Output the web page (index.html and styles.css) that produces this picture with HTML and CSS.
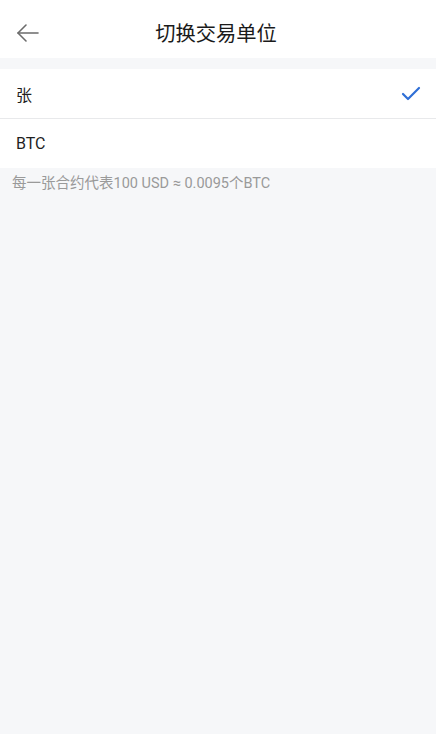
FILE: index.html
```html
<!DOCTYPE html>
<html lang="zh-CN">
<head>
    <meta charset="UTF-8">
    <meta name="viewport" content="width=device-width, initial-scale=1.0">
    <title>切换交易单位</title>
    <link rel="stylesheet" href="styles.css">
</head>
<body>
    <header class="top-bar">
        <span class="back-btn">
            <svg width="24" height="24" viewBox="0 0 24 24" fill="none" stroke="#6b6b6b" stroke-width="1.6" stroke-linecap="round" stroke-linejoin="round">
                <path d="M22 12H2"/>
                <path d="M10 4L2 12l8 8"/>
            </svg>
        </span>
        <h1 class="title">切换交易单位</h1>
    </header>

    <ul class="unit-list">
        <li class="unit-item">
            <span>张</span>
            <svg class="check" width="20" height="16" viewBox="0 0 20 16" fill="none" stroke="#2f6fd6" stroke-width="2.2" stroke-linecap="round" stroke-linejoin="round">
                <path d="M2 8l5 5L18 2"/>
            </svg>
        </li>
        <li class="unit-item">
            <span>BTC</span>
        </li>
    </ul>

    <p class="note">每一张合约代表100 USD ≈ 0.0095个BTC</p>
</body>
</html>
```

FILE: styles.css
```css
body {
    margin: 0;
    background-color: #f6f7f9;
    font-family: Roboto, "Noto Sans CJK SC", sans-serif;
    color: #1f1f1f;
    min-height: 734px;
}
.top-bar {
    height: 58px;
    padding-top: 10px;
    box-sizing: border-box;
    background-color: #fff;
    display: flex;
    align-items: center;
    justify-content: center;
    position: relative;
}
.back-btn {
    position: absolute;
    left: 16px;
    top: 21px;
    display: flex;
}
.title {
    margin: 0 0 0 -4px;
    font-size: 20.3px;
    font-weight: normal;
    color: #1a1a1a;
    line-height: 28px;
}
.unit-list {
    list-style: none;
    margin: 11px 0 0;
    padding: 0;
    background-color: #fff;
}
.unit-item {
    height: 49px;
    padding: 0 16px;
    display: flex;
    align-items: center;
    justify-content: space-between;
    font-size: 16px;
}
.unit-item + .unit-item {
    border-top: 1px solid #e8e9eb;
}
.check {
    margin-right: -1px;
}
.note {
    margin: 0;
    padding: 7px 12px;
    font-size: 14.5px;
    line-height: 18px;
    color: #9a9a9a;
}
```
